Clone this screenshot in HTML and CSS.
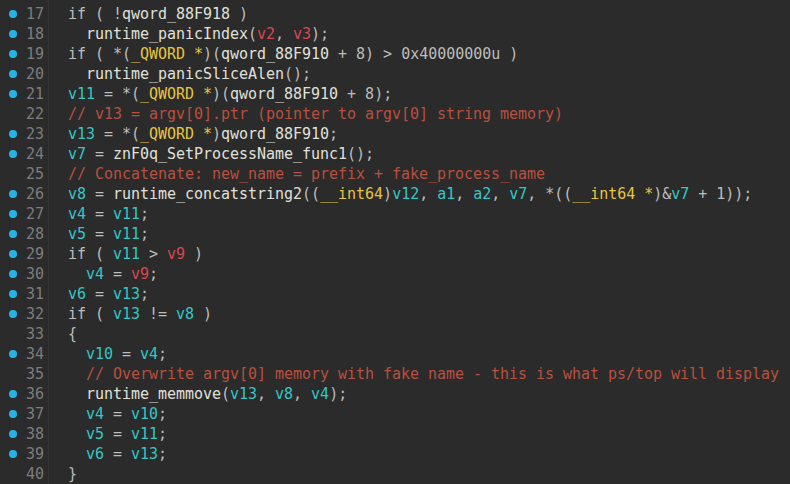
FILE: index.html
```html
<!DOCTYPE html>
<html>
<head>
<meta charset="utf-8">
<link rel="stylesheet" href="styles.css">
</head>
<body>
<div class="view">
<div class="row"><span class="mark on"></span><span class="num">17</span><code class="code">  <span class="k">if ( !</span><span class="f">qword_88F918</span><span class="k"> )</span></code></div>
<div class="row"><span class="mark on"></span><span class="num">18</span><code class="code">    <span class="f">runtime_panicIndex</span><span class="k">(</span><span class="a">v2</span><span class="k">, </span><span class="a">v3</span><span class="k">);</span></code></div>
<div class="row"><span class="mark on"></span><span class="num">19</span><code class="code">  <span class="k">if ( *(</span><span class="t">_QWORD *</span><span class="k">)(</span><span class="f">qword_88F910</span><span class="k"> + </span><span class="n">8</span><span class="k">) &gt; </span><span class="n">0x40000000u</span><span class="k"> )</span></code></div>
<div class="row"><span class="mark on"></span><span class="num">20</span><code class="code">    <span class="f">runtime_panicSliceAlen</span><span class="k">();</span></code></div>
<div class="row"><span class="mark on"></span><span class="num">21</span><code class="code">  <span class="v">v11</span><span class="k"> = *(</span><span class="t">_QWORD *</span><span class="k">)(</span><span class="f">qword_88F910</span><span class="k"> + </span><span class="n">8</span><span class="k">);</span></code></div>
<div class="row"><span class="mark"></span><span class="num">22</span><code class="code">  <span class="c">// v13 = argv[0].ptr (pointer to argv[0] string memory)</span></code></div>
<div class="row"><span class="mark on"></span><span class="num">23</span><code class="code">  <span class="v">v13</span><span class="k"> = *(</span><span class="t">_QWORD *</span><span class="k">)</span><span class="f">qword_88F910</span><span class="k">;</span></code></div>
<div class="row"><span class="mark on"></span><span class="num">24</span><code class="code">  <span class="v">v7</span><span class="k"> = </span><span class="f">znF0q_SetProcessName_func1</span><span class="k">();</span></code></div>
<div class="row"><span class="mark"></span><span class="num">25</span><code class="code">  <span class="c">// Concatenate: new_name = prefix + fake_process_name</span></code></div>
<div class="row"><span class="mark on"></span><span class="num">26</span><code class="code">  <span class="v">v8</span><span class="k"> = </span><span class="f">runtime_concatstring2</span><span class="k">((</span><span class="t">__int64</span><span class="k">)</span><span class="v">v12</span><span class="k">, </span><span class="v">a1</span><span class="k">, </span><span class="v">a2</span><span class="k">, </span><span class="v">v7</span><span class="k">, *((</span><span class="t">__int64 *</span><span class="k">)&amp;</span><span class="v">v7</span><span class="k"> + </span><span class="n">1</span><span class="k">));</span></code></div>
<div class="row"><span class="mark on"></span><span class="num">27</span><code class="code">  <span class="v">v4</span><span class="k"> = </span><span class="v">v11</span><span class="k">;</span></code></div>
<div class="row"><span class="mark on"></span><span class="num">28</span><code class="code">  <span class="v">v5</span><span class="k"> = </span><span class="v">v11</span><span class="k">;</span></code></div>
<div class="row"><span class="mark on"></span><span class="num">29</span><code class="code">  <span class="k">if ( </span><span class="v">v11</span><span class="k"> &gt; </span><span class="a">v9</span><span class="k"> )</span></code></div>
<div class="row"><span class="mark on"></span><span class="num">30</span><code class="code">    <span class="v">v4</span><span class="k"> = </span><span class="a">v9</span><span class="k">;</span></code></div>
<div class="row"><span class="mark on"></span><span class="num">31</span><code class="code">  <span class="v">v6</span><span class="k"> = </span><span class="v">v13</span><span class="k">;</span></code></div>
<div class="row"><span class="mark on"></span><span class="num">32</span><code class="code">  <span class="k">if ( </span><span class="v">v13</span><span class="k"> != </span><span class="v">v8</span><span class="k"> )</span></code></div>
<div class="row"><span class="mark"></span><span class="num">33</span><code class="code">  <span class="k">{</span></code></div>
<div class="row"><span class="mark on"></span><span class="num">34</span><code class="code">    <span class="v">v10</span><span class="k"> = </span><span class="v">v4</span><span class="k">;</span></code></div>
<div class="row"><span class="mark"></span><span class="num">35</span><code class="code">    <span class="c">// Overwrite argv[0] memory with fake name - this is what ps/top will display</span></code></div>
<div class="row"><span class="mark on"></span><span class="num">36</span><code class="code">    <span class="f">runtime_memmove</span><span class="k">(</span><span class="v">v13</span><span class="k">, </span><span class="v">v8</span><span class="k">, </span><span class="v">v4</span><span class="k">);</span></code></div>
<div class="row"><span class="mark on"></span><span class="num">37</span><code class="code">    <span class="v">v4</span><span class="k"> = </span><span class="v">v10</span><span class="k">;</span></code></div>
<div class="row"><span class="mark on"></span><span class="num">38</span><code class="code">    <span class="v">v5</span><span class="k"> = </span><span class="v">v11</span><span class="k">;</span></code></div>
<div class="row"><span class="mark on"></span><span class="num">39</span><code class="code">    <span class="v">v6</span><span class="k"> = </span><span class="v">v13</span><span class="k">;</span></code></div>
<div class="row"><span class="mark"></span><span class="num">40</span><code class="code">  <span class="k">}</span></code></div>
</div>
</body>
</html>
```

FILE: styles.css
```css
html, body {
  margin: 0;
  padding: 0;
  background: #2b2b2b;
  height: 100%;
  overflow: hidden;
}

.view {
  padding-top: 4px;
  height: 100%;
  font-family: "DejaVu Sans Mono", "Liberation Mono", monospace;
  font-size: 15px;
  letter-spacing: -0.03px;
  background: linear-gradient(to right, #2b2b2b 0, #2b2b2b 48px, #343434 48px, #343434 49px, #2b2b2b 49px);
}

.row {
  display: flex;
  align-items: center;
  height: 20px;
  line-height: 20px;
}

.mark {
  width: 26px;
  flex: none;
  display: flex;
  justify-content: center;
}

.mark.on::before {
  content: "";
  width: 8px;
  height: 8px;
  border-radius: 50%;
  background: #27b3e8;
}

.num {
  width: 18px;
  flex: none;
  text-align: right;
  color: #7d7d7d;
}

.code {
  font: inherit;
  white-space: pre;
  padding-left: 6px;
  color: #dcdcd6;
}

.k { color: #bdbdbd; }
.f { color: #e0e0da; }
.v { color: #35c6c6; }
.t { color: #e5c542; }
.a { color: #d9474f; }
.n { color: #bcbcbc; }
.c { color: #b9503f; }
```
